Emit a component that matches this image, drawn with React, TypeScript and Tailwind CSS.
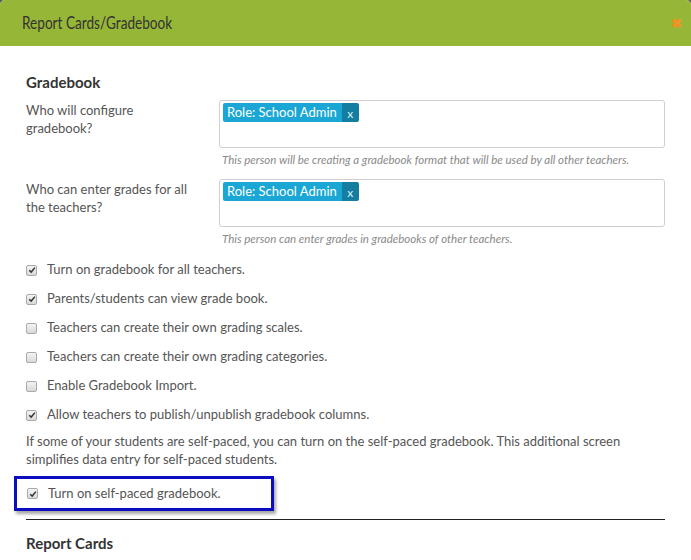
import React from "react";

const font = { fontFamily: "Lato, 'Open Sans', sans-serif" };

function Check({ checked }: { checked: boolean }) {
  return (
    <span className="relative inline-flex h-[11px] w-[11px] shrink-0 items-center justify-center rounded-[2px] border border-[#a9a9a9] bg-gradient-to-b from-[#f4f4f4] to-[#d9d9d9]">
      {checked && (
        <svg viewBox="0 0 10 10" className="h-[8px] w-[8px]">
          <path d="M1.5 5.2 L4 7.6 L8.6 2" fill="none" stroke="#333" strokeWidth="1.8" />
        </svg>
      )}
    </span>
  );
}

function Tag() {
  return (
    <div className="flex h-[19px] items-stretch overflow-hidden rounded-[2px] text-[13px] text-white">
      <span className="flex items-center bg-[#1aa7d5] pl-[4px] pr-[5px] leading-none">Role: School Admin</span>
      <span className="flex w-[17px] items-center justify-center bg-[#137ea0] pt-[2px] text-[12px] leading-none text-[#dff3fb]">x</span>
    </div>
  );
}

function Field({ label, help }: { label: string; help: string }) {
  return (
    <div className="flex">
      <div className="w-[193px] pr-[26px] pt-[1px] text-[13px] leading-[18px] text-[#555]">{label}</div>
      <div className="flex-1">
        <div className="flex h-[48px] items-start rounded-[3px] border border-[#cfcfcf] pl-[3px] pt-[2px]">
          <Tag />
        </div>
        <div className="mt-[6px] pl-[3px] text-[11.5px] italic leading-[12px] text-[#8a8a8a]">{help}</div>
      </div>
    </div>
  );
}

const items: [string, boolean][] = [
  ["Turn on gradebook for all teachers.", true],
  ["Parents/students can view grade book.", true],
  ["Teachers can create their own grading scales.", false],
  ["Teachers can create their own grading categories.", false],
  ["Enable Gradebook Import.", false],
  ["Allow teachers to publish/unpublish gradebook columns.", true],
];

export default function App() {
  return (
    <div className="h-[560px] w-[691px] overflow-hidden bg-[#5a5a5a]" style={font}>
      <div className="h-full rounded-t-[5px] bg-white">
        <div className="flex h-[46px] items-center justify-between rounded-t-[5px] bg-[#96b637] pl-[22px] pr-[9px]">
          <span className="inline-block origin-left scale-x-[0.8] pb-[1px] text-[17px] text-[#333]">Report Cards/Gradebook</span>
          <span className="mt-[2px] text-[13px] font-bold text-[#f39123]">✖</span>
        </div>
        <div className="pl-[26px] pr-[26px]">
          <div className="pt-[27px] text-[15px] font-bold leading-[18px] text-[#333]">Gradebook</div>
          <div className="mt-[9px]">
            <Field label="Who will configure gradebook?" help="This person will be creating a gradebook format that will be used by all other teachers." />
          </div>
          <div className="mt-[13px]">
            <Field label="Who can enter grades for all the teachers?" help="This person can enter grades in gradebooks of other teachers." />
          </div>
          <div className="mt-[16px] flex flex-col gap-[11px]">
            {items.map(([t, c]) => (
              <div key={t} className="flex h-[18px] items-center gap-[10px] text-[13px] text-[#555]">
                <Check checked={c} />
                <span>{t}</span>
              </div>
            ))}
          </div>
          <p className="mt-[8px] text-[13px] leading-[18px] text-[#555]">
            If some of your students are self-paced, you can turn on the self-paced gradebook. This additional screen simplifies data entry for self-paced students.
          </p>
          <div className="-ml-[12px] mt-[8px] flex h-[35px] w-[260px] items-center gap-[10px] border-[3px] border-[#0d0dc0] pl-[10px] text-[13px] text-[#555] shadow-[2px_3px_3px_rgba(0,0,0,0.35)]">
            <Check checked />
            <span>Turn on self-paced gradebook.</span>
          </div>
          <div className="mt-[8px] h-px bg-[#222]" />
          <div className="mt-[14px] text-[15px] font-bold leading-[18px] text-[#333]">Report Cards</div>
        </div>
      </div>
    </div>
  );
}
